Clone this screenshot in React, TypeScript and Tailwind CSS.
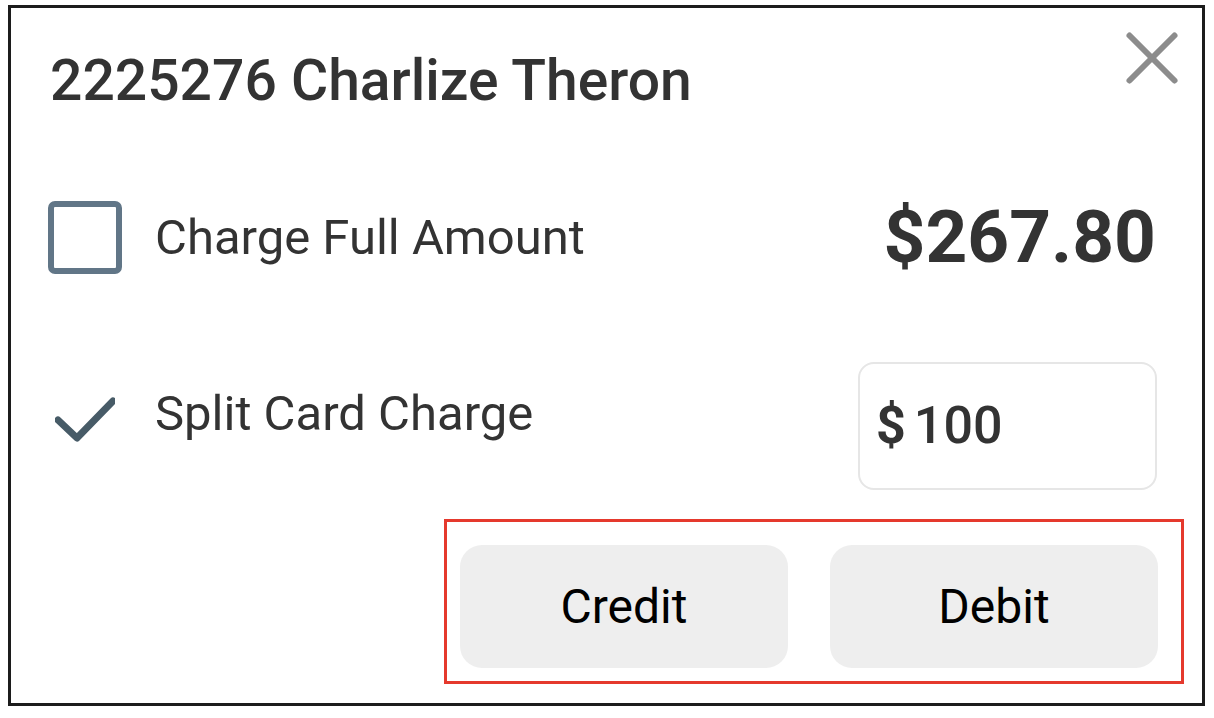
import { X } from 'lucide-react';

export default function App() {
  return (
    <div className="w-[1214px] h-[718px] bg-white pt-[5px] pl-[8px] font-['Roboto',sans-serif] text-[#333333]">
      <div className="w-[1197px] h-[701px] border-[3px] border-[#1c1c1c] flex flex-col">
        {/* header */}
        <div className="h-[139px] flex items-start justify-between pl-[39px] pr-[5px]">
          <h1 className="mt-[44px] text-[57px] leading-none font-medium">2225276 Charlize Theron</h1>
          <button className="mt-[5px] text-[#8c8c8c]">
            <X size={90} strokeWidth={1.6} />
          </button>
        </div>

        {/* full amount row */}
        <div className="h-[180px] flex items-center pl-[37px] pr-[46px]">
          <span className="w-[74px] h-[73px] rounded-[7px] border-[6px] border-[#617687] shrink-0" />
          <span className="ml-[33px] text-[49px] leading-none">Charge Full Amount</span>
          <span className="ml-auto text-[73px] leading-none font-bold">$267.80</span>
        </div>

        {/* split row */}
        <div className="mt-[35px] flex items-start pl-[44px] pr-[45px]">
          <svg width="60" height="46" viewBox="0 0 60 46" className="shrink-0 mt-[35px]">
            <polyline points="3,23 22,41 58,4" fill="none" stroke="#475b67" strokeWidth="7" strokeLinecap="round" strokeLinejoin="round" />
          </svg>
          <span className="ml-[40px] mt-[27px] text-[49px] leading-none">Split Card Charge</span>
          <div className="ml-auto w-[299px] h-[128px] rounded-[16px] border-2 border-[#e6e6e6] flex items-center pl-[16px]">
            <span className="text-[52px] font-bold leading-none">$</span>
            <span className="ml-[8px] text-[52px] font-medium leading-none">100</span>
          </div>
        </div>

        {/* card type buttons */}
        <div className="mt-[29px] self-end mr-[18px] w-[740px] h-[165px] border-[3px] border-[#e5392d] flex pl-[13px] pt-[23px] gap-[42px]">
          <button className="w-[328px] h-[123px] rounded-[22px] bg-[#eeeeee] text-black text-[48px]">Credit</button>
          <button className="w-[328px] h-[123px] rounded-[22px] bg-[#eeeeee] text-black text-[48px]">Debit</button>
        </div>
      </div>
    </div>
  );
}
